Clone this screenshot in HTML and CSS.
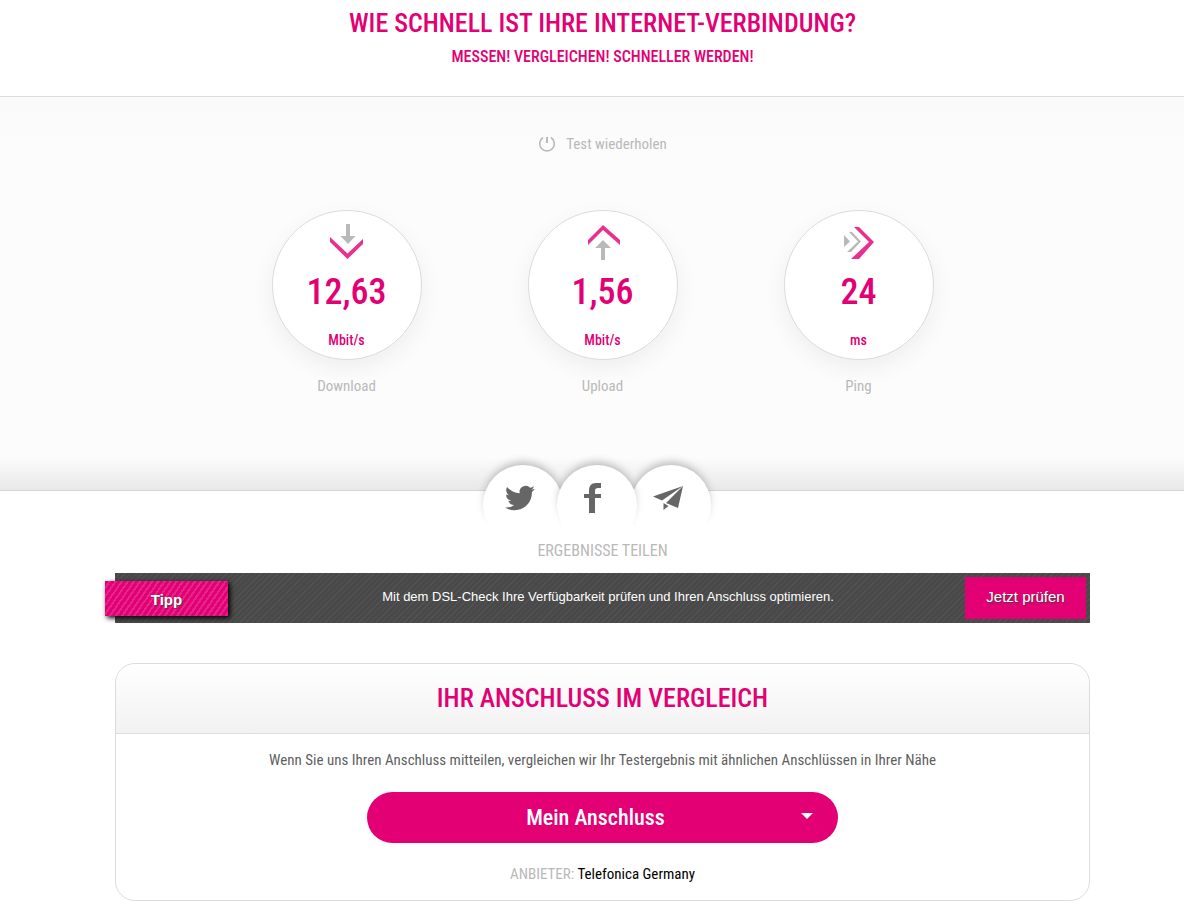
FILE: index.html
```
<!DOCTYPE html>
<html lang="de">
<head>
  <meta charset="UTF-8">
  <meta name="viewport" content="width=device-width, initial-scale=1.0">
  <title>Speedtest</title>
  <link rel="stylesheet" href="styles.css">
</head>
<body>
  <header class="head">
    <h1>Wie schnell ist Ihre Internet-Verbindung?</h1>
    <p class="claim">Messen! Vergleichen! Schneller werden!</p>
  </header>

  <section class="test">
    <a class="repeat" href="#">
      <svg width="18" height="18" viewBox="0 0 18 18" fill="none" stroke="#b9b9b9">
        <path stroke-width="1.600" d="M5 2.500a7.300 7.300 0 1 0 8 0"/>
        <path stroke-width="2" d="M9 2v6"/>
      </svg>
      Test wiederholen
    </a>
    <div class="results">
      <div class="result">
        <div class="circle">
          <svg width="34" height="36" viewBox="0 0 34 36">
            <path fill="#b9b9b9" d="M16 0h4v12h5.500l-7.500 8-7.500-8H16z"/>
            <path fill="#e8308f" d="M0 13l17.500 16.500L33 15v5L17.500 35 0 18z"/>
          </svg>
          <strong>12,63</strong>
          <span class="unit">Mbit/s</span>
        </div>
        <div class="label">Download</div>
      </div>
      <div class="result">
        <div class="circle">
          <svg width="34" height="36" viewBox="0 0 34 36">
            <path fill="#e8308f" d="M2 16v5L17 6l17 15v-5L17 1z"/>
            <path fill="#b9b9b9" d="M17 16l8 8h-6v12h-4V24H9z"/>
          </svg>
          <strong>1,56</strong>
          <span class="unit">Mbit/s</span>
        </div>
        <div class="label">Upload</div>
      </div>
      <div class="result">
        <div class="circle">
          <svg width="34" height="36" viewBox="0 0 34 36">
            <path fill="#b9b9b9" d="M2 11l6 6.500L2 23zM7 8h3l9 9.500L9 28H5l11-10.500z"/>
            <path fill="#e8308f" d="M12 3h5l15 15-15 17H9l18-17z"/>
          </svg>
          <strong>24</strong>
          <span class="unit">ms</span>
        </div>
        <div class="label">Ping</div>
      </div>
    </div>
  </section>

  <main class="content">
    <div class="share">
      <div class="share-links">
        <a href="#" aria-label="Twitter">
          <svg width="30" height="30" viewBox="0 0 24 24">
            <path d="M23.950 4.570a10 10 0 0 1-2.820.770 4.960 4.960 0 0 0 2.160-2.720c-.950.550-2 .950-3.130 1.180a4.920 4.920 0 0 0-8.380 4.480C7.690 8.090 4.070 6.130 1.640 3.160a4.920 4.920 0 0 0 1.520 6.570 4.900 4.900 0 0 1-2.230-.610v.060a4.930 4.930 0 0 0 3.950 4.830 5 5 0 0 1-2.210.090 4.940 4.940 0 0 0 4.600 3.420A9.870 9.870 0 0 1 0 19.540a13.990 13.990 0 0 0 7.550 2.210c9.050 0 14-7.500 14-13.980l-.020-.640a10 10 0 0 0 2.420-2.560z"/>
          </svg>
        </a>
        <a class="front" href="#" aria-label="Facebook">
          <svg width="30" height="30" viewBox="0 0 30 30">
            <path d="M10 30V15H5v-4h5V8c0-5 2-8 7-8h5v5h-3c-2 0-3 1-3 3v3h6v4h-6v15z"/>
          </svg>
        </a>
        <a href="#" aria-label="E-Mail">
          <svg width="30" height="30" viewBox="0 0 30 30">
            <path d="M30 3L0 13.500l9 4zM30 3L13 20l12 5zM10.500 20v7l5-4z"/>
          </svg>
        </a>
      </div>
      <p>Ergebnisse teilen</p>
    </div>

    <div class="tipp">
      <div class="tipp-tag">Tipp</div>
      <p>Mit dem DSL-Check Ihre Verfügbarkeit prüfen und Ihren Anschluss optimieren.</p>
      <button type="button">Jetzt prüfen</button>
    </div>

    <section class="compare">
      <h2>Ihr Anschluss im Vergleich</h2>
      <div class="compare-body">
        <label for="anschluss">Wenn Sie uns Ihren Anschluss mitteilen, vergleichen wir Ihr Testergebnis mit ähnlichen Anschlüssen in Ihrer Nähe</label>
        <div class="select">
          <select id="anschluss">
            <option>Mein Anschluss</option>
          </select>
        </div>
        <p class="provider"><span>ANBIETER:</span> Telefonica Germany</p>
      </div>
    </section>
  </main>
</body>
</html>
```
FILE: styles.css
```
* {
  box-sizing: border-box;
}

body {
  margin: 0;
  background: #fff;
  color: #5f5f5f;
  font-family: "Roboto Condensed", "Liberation Sans Narrow", Roboto, sans-serif;
  font-size: 15px;
  line-height: 20px;
}

h1, h2, p {
  margin: 0;
}

.head, .test, .content {
  padding-left: 21px;
}

.head {
  height: 96px;
  padding-top: 8px;
  text-align: center;
  text-transform: uppercase;
  color: #e20074;
}

h1, h2 {
  font-size: 26px;
  line-height: 30px;
  font-weight: 500;
}

.claim {
  margin-top: 9px;
  font-size: 16px;
  font-weight: 500;
}

.test {
  height: 395px;
  padding-top: 37px;
  display: flex;
  flex-direction: column;
  align-items: center;
  gap: 56px;
  border-top: 1px solid #dcdcdc;
  border-bottom: 1px solid #d6d6d6;
  background: linear-gradient(#fafafa, #fcfcfc 60px, #fcfcfc 360px, #e8e8e8);
}

.repeat {
  display: flex;
  align-items: center;
  gap: 10px;
  color: #b9b9b9;
  text-decoration: none;
}

.results {
  display: flex;
  gap: 106px;
}

.result {
  text-align: center;
}

.circle {
  width: 150px;
  height: 150px;
  padding-top: 13px;
  display: flex;
  flex-direction: column;
  align-items: center;
  border: 1px solid #dcdcdc;
  border-radius: 50%;
  background: #fff;
  box-shadow: 0 8px 24px rgba(0, 0, 0, 0.06);
  color: #e20074;
}

.circle strong {
  margin-top: 12px;
  font-size: 36px;
  line-height: 40px;
  font-weight: 500;
}

.unit {
  margin-top: 18px;
  font-size: 14px;
  font-weight: 500;
}

.label {
  margin-top: 16px;
  color: #b9b9b9;
}

.content {
  width: 996px;
  max-width: 100%;
  margin: 0 auto;
}

.share {
  position: relative;
  margin-top: -36px;
  text-align: center;
  text-transform: uppercase;
  font-size: 16px;
  color: #b9b9b9;
}

/* circles fade out below the edge of the grey area */
.share-links {
  height: 86px;
  padding: 10px 11px 0 0;
  display: flex;
  justify-content: center;
  -webkit-mask-image: linear-gradient(#000 58px, transparent 74px);
  mask-image: linear-gradient(#000 58px, transparent 74px);
}

.share-links a {
  width: 80px;
  height: 80px;
  margin: 0 -3px;
  padding: 18px 6px 0 0;
  border-radius: 50%;
  background: #fff;
  box-shadow: 0 -5px 8px -2px rgba(0, 0, 0, 0.25);
  fill: #666;
}

.share-links .front {
  z-index: 1;
}

.tipp {
  height: 50px;
  margin-top: 12px;
  padding: 4px;
  display: flex;
  justify-content: space-between;
  background: repeating-linear-gradient(135deg, #494949 0 3px, #525252 3px 4px);
  color: #fff;
  font-family: "Liberation Sans", Arial, sans-serif;
}

.tipp-tag {
  width: 123px;
  height: 35px;
  margin: 4px 0 0 -14px;
  background: repeating-linear-gradient(125deg, #e20074 0 3px, #e6258a 3px 5px);
  box-shadow: 2px 2px 5px #000;
  font-size: 15px;
  line-height: 38px;
  font-weight: bold;
  text-align: center;
  text-shadow: 1px 1px 1px #444;
}

.tipp p {
  flex: 1;
  padding-left: 23px;
  font-size: 13px;
  line-height: 40px;
  text-align: center;
}

.tipp button {
  width: 121px;
  padding: 0 0 3px;
  border: 0;
  background: #e20074;
  color: #fff;
  font: 15px "Liberation Sans", Arial, sans-serif;
  text-shadow: 1px 1px 1px #444;
}

.compare {
  margin-top: 40px;
  border: 1px solid #dcdcdc;
  border-radius: 20px;
  text-align: center;
}

.compare h2 {
  height: 70px;
  border-bottom: 1px solid #dcdcdc;
  border-radius: 20px 20px 0 0;
  background: linear-gradient(#fff, #f2f2f2);
  color: #e20074;
  line-height: 68px;
  text-transform: uppercase;
}

.compare-body {
  padding: 16px 20px;
}

.compare label {
  display: block;
}

.select {
  position: relative;
  width: 471px;
  max-width: 100%;
  margin: 22px auto 21px;
}

.select::after {
  content: "";
  position: absolute;
  top: 21px;
  right: 25px;
  border: 6px solid transparent;
  border-top-color: #fff;
  border-bottom: 0;
  pointer-events: none;
}

.select select {
  width: 100%;
  height: 51px;
  padding: 0 14px 0 0;
  appearance: none;
  border: 0;
  border-radius: 26px;
  background: #e20074;
  color: #fff;
  font-family: inherit;
  font-size: 22px;
  font-weight: 500;
  text-align: center;
  text-align-last: center;
}

.provider {
  color: #000;
}

.provider span {
  color: #b9b9b9;
}
```
